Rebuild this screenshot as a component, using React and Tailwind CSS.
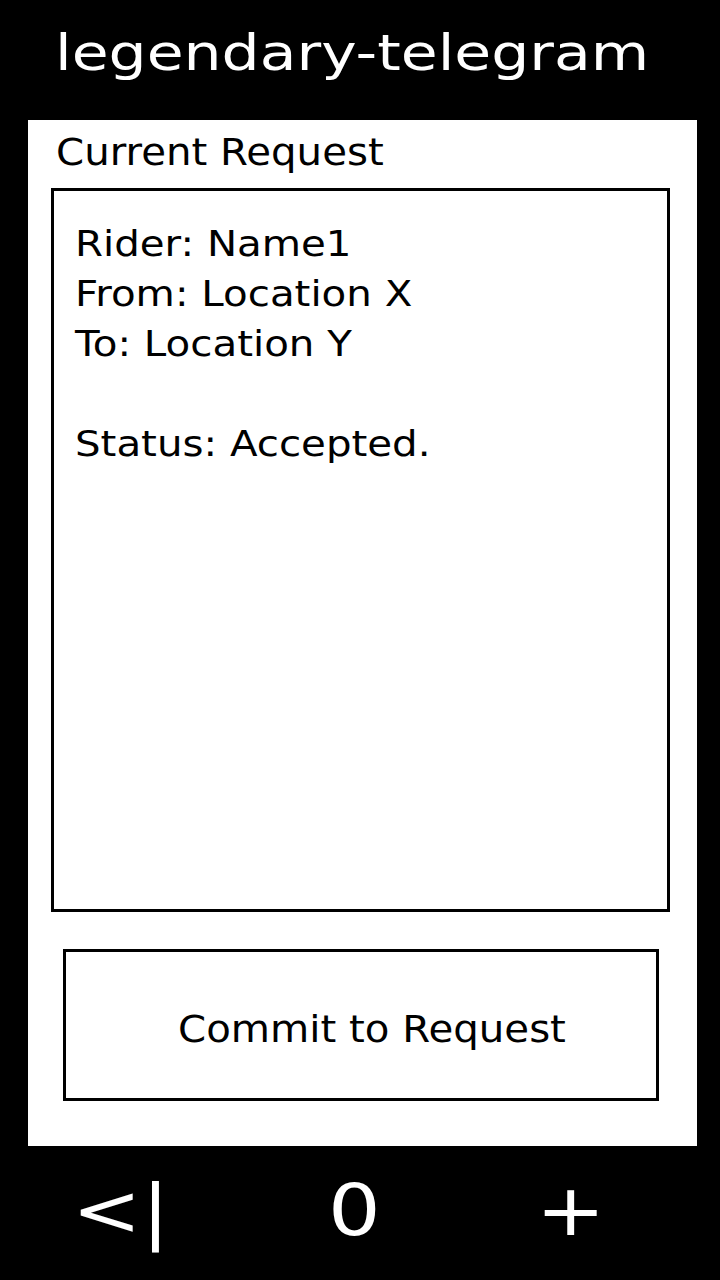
export default function App() {
  return (
    <div className="w-[720px] h-[1280px] bg-black flex flex-col font-['DejaVu_Sans',sans-serif]">
      <header className="h-[120px] flex items-center pl-[55px] pb-[14px] text-white">
        <h1 className="text-[50px] leading-none font-normal origin-left scale-x-[1.2]">legendary-telegram</h1>
      </header>
      <main className="mx-[28px] w-[669px] h-[1026px] bg-white flex flex-col text-black">
        <div className="pl-[28px] pt-[10px] h-[68px]">
          <span className="block text-[38px] leading-[44px] origin-left scale-x-[1.06]">Current Request</span>
        </div>
        <div className="ml-[23px] w-[619px] h-[724px] border-[3px] border-black pl-[21px] pt-[28px] text-[36px] leading-[50px]">
          <div className="origin-left scale-x-[1.12]">
            <div>Rider: Name1</div>
            <div>From: Location X</div>
            <div>To: Location Y</div>
            <div>&nbsp;</div>
            <div>Status: Accepted.</div>
          </div>
        </div>
        <button className="ml-[35px] mt-[37px] w-[596px] h-[152px] border-[3px] border-black bg-white flex items-center justify-center pl-[22px] pt-[8px] text-[38px] text-black font-['DejaVu_Sans',sans-serif]">
          <span className="scale-x-[1.06]">Commit to Request</span>
        </button>
      </main>
      <nav className="flex-1 flex items-start pl-[72px] pt-[28px] text-white text-[72px] leading-none">
        <span className="w-[256px] origin-left scale-x-[1.15]">&lt;|</span>
        <span className="w-[208px] origin-left scale-x-[1.15]">0</span>
        <span className="origin-left scale-x-[1.15]">+</span>
      </nav>
    </div>
  );
}
